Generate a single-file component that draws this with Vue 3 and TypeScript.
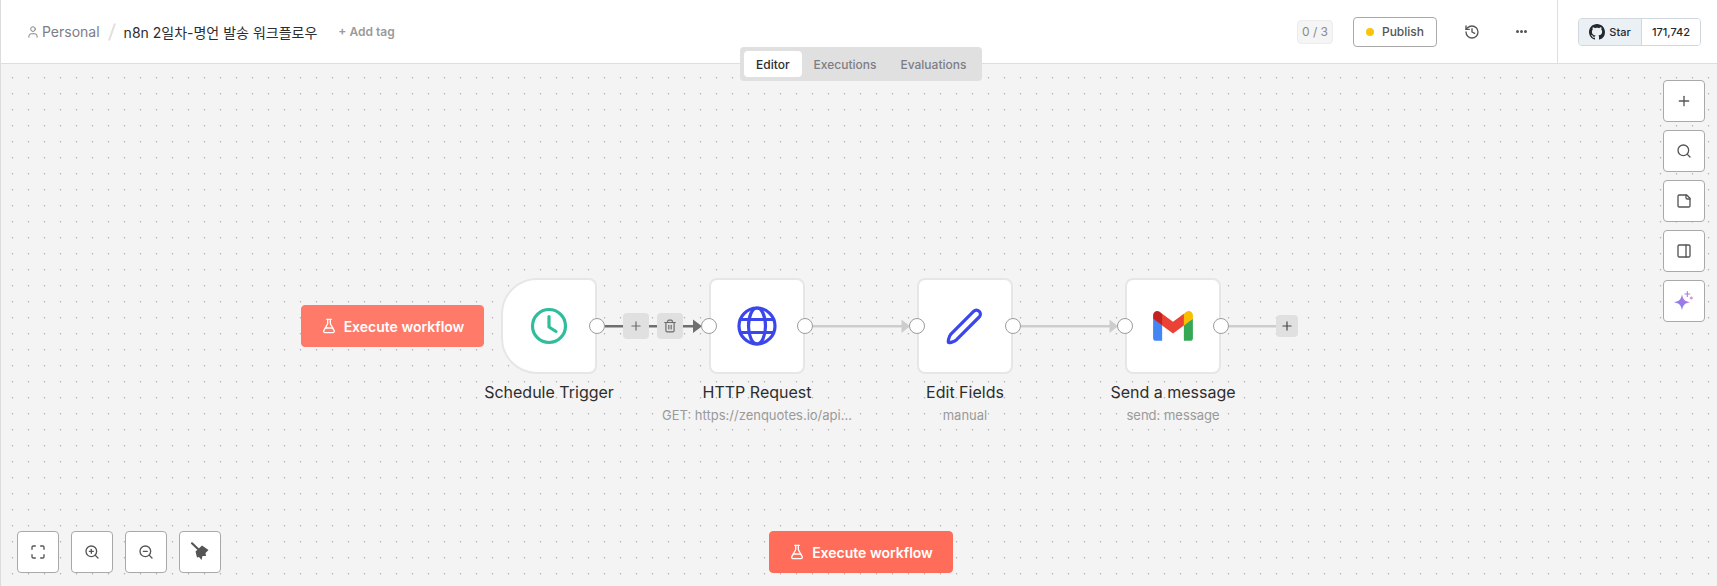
<script setup lang="ts">
interface Glyph { d: string[] }

const flask = [
  'M14 2v6a2 2 0 0 0 .245.96l5.51 10.08A2 2 0 0 1 18 22H6a2 2 0 0 1-1.755-2.96l5.51-10.08A2 2 0 0 0 10 8V2',
  'M6.453 15h11.094',
  'M8.5 2h7',
]
const trash = [
  'M3 6h18',
  'M19 6v14c0 1-1 2-2 2H7c-1 0-2-1-2-2V6',
  'M8 6V4c0-1 1-2 2-2h4c1 0 2 1 2 2v2',
  'M10 11v6',
  'M14 11v6',
]
const plus = ['M5 12h14', 'M12 5v14']

const sideTools: Glyph[] = [
  { d: plus },
  { d: ['M19 11a8 8 0 1 1-16 0a8 8 0 1 1 16 0', 'm21 21-4.3-4.3'] },
  { d: ['M16 3H5a2 2 0 0 0-2 2v14a2 2 0 0 0 2 2h14a2 2 0 0 0 2-2V8Z', 'M15 3v4a2 2 0 0 0 2 2h4'] },
  { d: ['M5 3h14a2 2 0 0 1 2 2v14a2 2 0 0 1-2 2H5a2 2 0 0 1-2-2V5a2 2 0 0 1 2-2Z', 'M15 3v18'] },
]
const zoomTools: Glyph[] = [
  { d: ['M8 3H5a2 2 0 0 0-2 2v3', 'M21 8V5a2 2 0 0 0-2-2h-3', 'M3 16v3a2 2 0 0 0 2 2h3', 'M16 21h3a2 2 0 0 0 2-2v-3'] },
  { d: ['M19 11a8 8 0 1 1-16 0a8 8 0 1 1 16 0', 'M21 21l-4.35-4.35', 'M11 8v6', 'M8 11h6'] },
  { d: ['M19 11a8 8 0 1 1-16 0a8 8 0 1 1 16 0', 'M21 21l-4.35-4.35', 'M8 11h6'] },
]

const nodes = [
  { id: 'trigger', name: 'Schedule Trigger', sub: '', x: 500, trigger: true },
  { id: 'http', name: 'HTTP Request', sub: 'GET: https://zenquotes.io/api...', x: 708, trigger: false },
  { id: 'edit', name: 'Edit Fields', sub: 'manual', x: 916, trigger: false },
  { id: 'gmail', name: 'Send a message', sub: 'send: message', x: 1124, trigger: false },
]
</script>

<template>
  <div class="app">
    <header class="topbar">
      <div class="crumbs">
        <svg class="ico user" viewBox="0 0 24 24"><path d="M19 21v-2a4 4 0 0 0-4-4H9a4 4 0 0 0-4 4v2" /><circle cx="12" cy="7" r="4" /></svg>
        <span class="project">Personal</span>
        <span class="slash"></span>
        <span class="title">n8n 2일차-명언 발송 워크플로우</span>
        <span class="addtag">+ Add tag</span>
      </div>
      <div class="actions">
        <span class="count">0 / 3</span>
        <button class="publish"><i class="dot"></i>Publish</button>
        <svg class="ico history" viewBox="0 0 24 24"><path d="M3 12a9 9 0 1 0 9-9 9.75 9.75 0 0 0-6.74 2.74L3 8" /><path d="M3 3v5h5" /><path d="M12 7v5l4 2" /></svg>
        <span class="more"><i></i><i></i><i></i></span>
      </div>
      <div class="github">
        <div class="gh">
          <span class="star">
            <svg class="mark" viewBox="0 0 16 16"><path d="M8 0C3.58 0 0 3.58 0 8c0 3.54 2.29 6.53 5.47 7.59.4.07.55-.17.55-.38 0-.19-.01-.82-.01-1.49-2.01.37-2.53-.49-2.69-.94-.09-.23-.48-.94-.82-1.13-.28-.15-.68-.52-.01-.53.63-.01 1.08.58 1.23.82.72 1.21 1.87.87 2.33.66.07-.52.28-.87.51-1.07-1.78-.2-3.64-.89-3.64-3.95 0-.87.31-1.59.82-2.15-.08-.2-.36-1.02.08-2.12 0 0 .67-.21 2.2.82.64-.18 1.32-.27 2-.27.68 0 1.36.09 2 .27 1.53-1.04 2.2-.82 2.2-.82.44 1.1.16 1.92.08 2.12.51.56.82 1.27.82 2.15 0 3.07-1.87 3.75-3.65 3.95.29.25.54.73.54 1.48 0 1.07-.01 1.93-.01 2.2 0 .21.15.46.55.38A8.013 8.013 0 0016 8c0-4.42-3.58-8-8-8z" /></svg>
            Star
          </span>
          <span class="stars">171,742</span>
        </div>
      </div>
    </header>

    <main class="canvas">
      <svg class="grid" width="100%" height="100%">
        <defs>
          <pattern id="dots" x="9" y="11" width="16" height="16" patternUnits="userSpaceOnUse">
            <circle cx="2.500" cy="2.700" r="0.800" fill="#b0b0b0" />
          </pattern>
        </defs>
        <rect width="100%" height="100%" fill="url(#dots)" />
      </svg>

      <svg class="edges" width="100%" height="100%">
        <path class="edge hot" d="M604 262.300H623M648 262.300H657M682 262.300H694" />
        <path class="head hot" d="M692 255.500L701 262.300L692 269Z" />
        <path class="edge" d="M812 262.300H902" />
        <path class="head" d="M900.500 255.500L909 262.300L900.500 269Z" />
        <path class="edge" d="M1020 262.300H1110" />
        <path class="head" d="M1108.500 255.500L1117 262.300L1108.500 269Z" />
        <path class="edge" d="M1228 262.300H1276" />
      </svg>

      <div class="tabs">
        <span class="tab on">Editor</span>
        <span class="tab">Executions</span>
        <span class="tab">Evaluations</span>
      </div>

      <button class="run run-inline">
        <svg class="ico flask" viewBox="0 0 24 24"><path v-for="p in flask" :key="p" :d="p" /></svg>
        Execute workflow
      </button>

      <div v-for="n in nodes" :key="n.id" class="node" :style="{ left: n.x + 'px' }">
        <div class="box" :class="{ trigger: n.trigger }">
          <svg v-if="n.id === 'trigger'" class="logo clock" viewBox="0 0 40 40"><circle cx="20" cy="20" r="16.500" /><path d="M20 10.500V21l7 4.500" /></svg>
          <svg v-else-if="n.id === 'http'" class="logo globe" viewBox="0 0 40 40"><circle cx="20" cy="20" r="18" /><ellipse cx="20" cy="20" rx="8.500" ry="18" /><path d="M3.500 13.500h33M3.500 26.500h33" /></svg>
          <svg v-else-if="n.id === 'edit'" class="logo pencil" viewBox="0 0 40 40"><path d="M3.500 36.500c-.6-.4-.5-1 .2-3.700.6-2.200 1.200-3.600 2.200-4.700L28.600 5.400c1.600-1.600 4-1.600 5.600 0s1.600 4 0 5.600L11.600 33.700c-1.100 1-2.500 1.800-4.700 2.400-1.700.5-2.900.8-3.400.4Z" /></svg>
          <svg v-else class="gmail" viewBox="0 0 256 193">
            <path fill="#4285F4" d="M58.182 192.050V93.140L27.507 65.077 0 49.504v125.091c0 9.658 7.825 17.455 17.455 17.455h40.727z" />
            <path fill="#34A853" d="M197.818 192.050h40.727c9.659 0 17.455-7.826 17.455-17.455V49.505l-31.156 17.837-27.026 25.798v98.910z" />
            <path fill="#EA4335" d="M58.182 93.140l-4.174-38.647 4.174-36.989L128 69.868l69.818-52.364 4.669 34.992-4.669 40.644L128 145.504z" />
            <path fill="#FBBC04" d="M197.818 17.504V93.140L256 49.504V26.231c0-21.585-24.640-33.890-41.890-20.945l-16.292 12.218z" />
            <path fill="#C5221F" d="M0 49.504l26.759 20.070L58.182 93.140V17.504L41.890 5.286C24.610-7.660 0 4.646 0 26.230v23.273z" />
          </svg>
          <span v-if="!n.trigger" class="port in"></span>
          <span class="port out"></span>
        </div>
        <div class="name">{{ n.name }}</div>
        <div v-if="n.sub" class="sub">{{ n.sub }}</div>
      </div>

      <span class="edge-btn add"><svg class="ico" viewBox="0 0 24 24"><path v-for="p in plus" :key="p" :d="p" /></svg></span>
      <span class="edge-btn del"><svg class="ico" viewBox="0 0 24 24"><path v-for="p in trash" :key="p" :d="p" /></svg></span>
      <span class="edge-btn end"><svg class="ico" viewBox="0 0 24 24"><path v-for="p in plus" :key="p" :d="p" /></svg></span>

      <aside class="side">
        <button v-for="t in sideTools" :key="t.d[0]" class="tool">
          <svg class="ico" viewBox="0 0 24 24"><path v-for="p in t.d" :key="p" :d="p" /></svg>
        </button>
        <button class="tool">
          <svg class="spark" viewBox="0 0 24 24">
            <defs>
              <linearGradient id="sparkle" x1="0" y1="1" x2="1" y2="0">
                <stop offset="0" stop-color="#6f7cf6" />
                <stop offset="1" stop-color="#c878dc" />
              </linearGradient>
            </defs>
            <path fill="url(#sparkle)" d="M10 5.300C11 10.500 12.500 12.300 18 13.300 12.500 14.300 11 16 10 21.300 9 16 7.500 14.300 2 13.300 7.500 12.300 9 10.500 10 5.300Z" />
            <path stroke="#a97be6" stroke-width="1.100" stroke-linecap="round" fill="none" d="M15.300 2.600v4.800M12.900 5h4.800" />
            <path fill="#e08fce" d="M19.300 7.200l1.900 1.800-1.900 1.800-1.900-1.800Z" />
          </svg>
        </button>
      </aside>

      <div class="zoom">
        <button v-for="t in zoomTools" :key="t.d[0] + t.d.length" class="tool">
          <svg class="ico" viewBox="0 0 24 24"><path v-for="p in t.d" :key="p" :d="p" /></svg>
        </button>
        <button class="tool">
          <svg class="brush" viewBox="0 0 24 24">
            <path class="brush-handle" d="M4 3.300L10 9" />
            <path d="M7.500 11.500L14 5.500L20.500 10L17.500 13L18 16L14.500 16L13.500 20L11 17L9 17.500Z" />
          </svg>
        </button>
      </div>

      <button class="run run-bottom">
        <svg class="ico flask" viewBox="0 0 24 24"><path v-for="p in flask" :key="p" :d="p" /></svg>
        Execute workflow
      </button>
    </main>
  </div>
</template>

<style>
html, body { margin: 0; background: #fff; }
</style>

<style scoped>
.app {
  width: 1717px;
  height: 586px;
  box-sizing: border-box;
  border-left: 1px solid #dcdcdc;
  display: flex;
  flex-direction: column;
  overflow: hidden;
  font-family: Inter, "Noto Sans CJK KR", sans-serif;
  color: #2d2d2d;
}
button { font-family: inherit; cursor: pointer; }
.ico {
  width: 16px;
  height: 16px;
  fill: none;
  stroke: currentColor;
  stroke-width: 2;
  stroke-linecap: round;
  stroke-linejoin: round;
  flex: none;
}

.topbar {
  height: 63px;
  flex: none;
  display: flex;
  align-items: center;
  background: #fff;
  border-bottom: 1px solid #dedede;
}
.crumbs {
  display: flex;
  align-items: center;
  flex: 1;
  padding-left: 25px;
  font-size: 14px;
}
.user { width: 14px; height: 14px; color: #7b7b7b; stroke-width: 1.600; }
.project { margin-left: 2px; color: #7d7d85; }
.slash {
  width: 2px;
  height: 18px;
  margin: 0 11px 0 11px;
  background: #e0e0e0;
  transform: rotate(19deg);
}
.title { color: #2d2d2d; }
.addtag { margin-left: 21px; font-size: 12px; font-weight: 600; color: #9a9a9a; }

.actions { display: flex; align-items: center; padding-right: 30px; }
.count {
  width: 36px;
  height: 24px;
  box-sizing: border-box;
  margin-right: 20px;
  display: flex;
  align-items: center;
  justify-content: center;
  background: #f5f5f5;
  border: 1px solid #ececec;
  border-radius: 4px;
  font-size: 12px;
  color: #8a8a8a;
}
.publish {
  width: 84px;
  height: 30px;
  box-sizing: border-box;
  display: flex;
  align-items: center;
  justify-content: center;
  gap: 8px;
  padding: 0;
  background: #fff;
  border: 1px solid #a9a9a9;
  border-radius: 4px;
  font-size: 12px;
  font-weight: 500;
  color: #555;
}
.dot { width: 8px; height: 8px; border-radius: 50%; background: #fcc40b; }
.history { margin-left: 27px; color: #555; }
.more { margin-left: 36px; display: flex; gap: 1px; }
.more i { width: 3px; height: 3px; border-radius: 50%; background: #555; }

.github {
  width: 160px;
  height: 63px;
  box-sizing: border-box;
  border-left: 1px solid #dedede;
  display: flex;
  align-items: center;
  padding-left: 20px;
}
.gh {
  display: flex;
  height: 28px;
  width: 123px;
  box-sizing: border-box;
  border: 1px solid #d0d7de;
  border-radius: 4px;
  font-size: 11px;
  font-weight: 500;
  overflow: hidden;
}
.star {
  width: 62px;
  flex: none;
  display: flex;
  align-items: center;
  justify-content: center;
  gap: 4px;
  background: #ebf0f4;
  border-right: 1px solid #d0d7de;
  color: #24292f;
}
.mark { width: 16px; height: 16px; fill: #24292f; }
.stars { flex: 1; display: flex; align-items: center; justify-content: center; color: #24292f; background: #fff; }

.canvas {
  position: relative;
  flex: 1;
  background: #f4f4f4;
}
.grid, .edges { position: absolute; inset: 0; }
.edge { fill: none; stroke: #cdcdcd; stroke-width: 2.400; }
.head { fill: #cdcdcd; }
.edge.hot { stroke: #6f6f6f; }
.head.hot { fill: #6f6f6f; }

.tabs {
  position: absolute;
  top: -17px;
  left: 739px;
  width: 242px;
  height: 34px;
  box-sizing: border-box;
  padding: 4px;
  display: flex;
  background: #e0e0e0;
  border-radius: 4px;
  font-size: 12px;
  font-weight: 500;
  color: #7d7d85;
}
.tab { display: flex; align-items: center; justify-content: center; padding: 0 12px; border-radius: 4px; }
.tab.on { background: #fff; color: #2d2d2d; }

.run {
  position: absolute;
  height: 42px;
  width: 184px;
  display: flex;
  align-items: center;
  justify-content: center;
  gap: 7px;
  padding: 0;
  border: 1px solid #ff6d5a;
  border-radius: 4px;
  background: #ff6d5a;
  color: #fff;
  font-size: 14px;
  font-weight: 600;
}
.run-inline { left: 300px; top: 241px; width: 183px; background: #ff7a68; border-color: #ff7a68; }
.run-bottom { left: 768px; top: 467px; }

.node {
  position: absolute;
  top: 214px;
  width: 96px;
  display: flex;
  flex-direction: column;
  align-items: center;
}
.box {
  position: relative;
  width: 96px;
  height: 96px;
  box-sizing: border-box;
  display: flex;
  align-items: center;
  justify-content: center;
  background: #fff;
  border: 2px solid #e6e6e6;
  border-radius: 8px;
}
.box.trigger { border-radius: 36px 8px 8px 36px; }
.logo { width: 40px; height: 40px; fill: none; stroke-linecap: round; stroke-linejoin: round; }
.clock { stroke: #30bd9c; stroke-width: 3.200; }
.globe { stroke: #3b47ea; stroke-width: 3.200; }
.pencil { stroke: #3b47ea; stroke-width: 3.200; }
.gmail { width: 40px; height: 30px; }
.port {
  position: absolute;
  top: 38px;
  width: 16px;
  height: 16px;
  box-sizing: border-box;
  background: #fff;
  border: 1.500px solid #9c9c9c;
  border-radius: 50%;
}
.port.in { left: -10px; }
.port.out { right: -10px; }
.name {
  margin-top: 8px;
  white-space: nowrap;
  font-size: 16px;
  line-height: 20px;
  color: #2d2d2d;
}
.sub {
  margin-top: 3px;
  white-space: nowrap;
  font-size: 13px;
  line-height: 20px;
  color: #9a9a9a;
}

.edge-btn {
  position: absolute;
  display: flex;
  align-items: center;
  justify-content: center;
  width: 26px;
  height: 26px;
  background: #e0e0e0;
  border-radius: 4px;
  color: #6a6a6a;
}
.edge-btn .ico { width: 14px; height: 14px; }
.add { left: 622px; top: 249px; }
.del { left: 656px; top: 249px; }
.end { left: 1275px; top: 251px; width: 22px; height: 22px; color: #444; }

.side {
  position: absolute;
  top: 16px;
  left: 1662px;
  display: flex;
  flex-direction: column;
  gap: 8px;
}
.zoom {
  position: absolute;
  top: 467px;
  left: 16px;
  display: flex;
  gap: 12px;
}
.tool {
  width: 42px;
  height: 42px;
  box-sizing: border-box;
  display: flex;
  align-items: center;
  justify-content: center;
  padding: 0;
  background: #fff;
  border: 1px solid #a9a9a9;
  border-radius: 4px;
  color: #555;
}
.spark { width: 24px; height: 24px; flex: none; }
.brush { width: 24px; height: 24px; flex: none; fill: #555; }
.brush-handle { fill: none; stroke: #555; stroke-width: 2.200; stroke-linecap: round; }
</style>
